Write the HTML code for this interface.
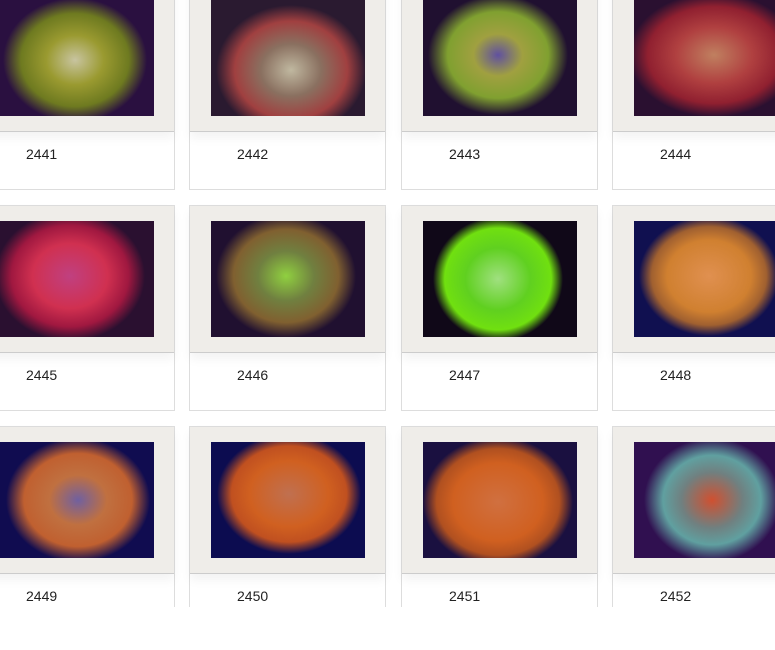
<!DOCTYPE html><html><head><style>
body{margin:0;width:775px;height:650px;overflow:hidden;background:#fff;font-family:"Liberation Sans",sans-serif}
#clip{position:absolute;left:0;top:0;width:775px;height:607px;overflow:hidden}
.c{position:absolute;width:195px;height:204px;border:1px solid #ddd;background:#fff}
.g{position:absolute;left:0;top:0;width:195px;height:146px;background:#efede9;border-bottom:1px solid #ccc;box-shadow:0 6px 10px rgba(0,0,0,.05)}
.p{position:absolute;left:21px;top:15px;width:154px;height:116px}
.t{position:absolute;left:47px;top:161px;font-size:14px;color:#222}
</style></head><body><div id="clip">
<div class="c" style="left:-22px;top:-16px"><div class="g"><div class="p" style="background:radial-gradient(ellipse 72px 62px at 75px 60px,#c8c4a0 0%,#9a9a30 40%,#6e7a20 75%,#2a1040 100%)"></div></div><div class="t">2441</div></div>
<div class="c" style="left:189px;top:-16px"><div class="g"><div class="p" style="background:radial-gradient(ellipse 75px 65px at 80px 70px,#c0b8a0 0%,#8a7060 40%,#a04040 75%,#2a1a30 100%)"></div></div><div class="t">2442</div></div>
<div class="c" style="left:401px;top:-16px"><div class="g"><div class="p" style="background:radial-gradient(ellipse 70px 60px at 75px 55px,#6050a0 0%,#a0a040 35%,#80a030 72%,#201030 100%)"></div></div><div class="t">2443</div></div>
<div class="c" style="left:612px;top:-16px"><div class="g"><div class="p" style="background:radial-gradient(ellipse 85px 62px at 80px 55px,#c08060 0%,#b04040 45%,#902030 78%,#2a1030 100%)"></div></div><div class="t">2444</div></div>

<div class="c" style="left:-22px;top:205px"><div class="g"><div class="p" style="background:radial-gradient(ellipse 75px 65px at 70px 55px,#c04080 0%,#d03050 50%,#a01840 78%,#2a1030 100%)"></div></div><div class="t">2445</div></div>
<div class="c" style="left:189px;top:205px"><div class="g"><div class="p" style="background:radial-gradient(ellipse 70px 62px at 75px 55px,#90d040 0%,#708040 40%,#806030 75%,#201030 100%)"></div></div><div class="t">2446</div></div>
<div class="c" style="left:401px;top:205px"><div class="g"><div class="p" style="background:radial-gradient(ellipse 65px 62px at 75px 58px,#a0e080 0%,#60d020 50%,#70e010 82%,#100818 100%)"></div></div><div class="t">2447</div></div>
<div class="c" style="left:612px;top:205px"><div class="g"><div class="p" style="background:radial-gradient(ellipse 70px 60px at 75px 55px,#e09050 0%,#d08030 60%,#a06030 82%,#101050 100%)"></div></div><div class="t">2448</div></div>

<div class="c" style="left:-22px;top:426px"><div class="g"><div class="p" style="background:radial-gradient(ellipse 72px 62px at 78px 58px,#7060a0 0%,#c07040 40%,#c06030 75%,#100c50 100%)"></div></div><div class="t">2449</div></div>
<div class="c" style="left:189px;top:426px"><div class="g"><div class="p" style="background:radial-gradient(ellipse 72px 60px at 78px 52px,#c07050 0%,#d06020 55%,#c05020 80%,#0c0c50 100%)"></div></div><div class="t">2450</div></div>
<div class="c" style="left:401px;top:426px"><div class="g"><div class="p" style="background:radial-gradient(ellipse 75px 65px at 75px 60px,#d07040 0%,#d06020 60%,#b05020 82%,#1a1040 100%)"></div></div><div class="t">2451</div></div>
<div class="c" style="left:612px;top:426px"><div class="g"><div class="p" style="background:radial-gradient(ellipse 68px 62px at 78px 58px,#d05030 0%,#708080 45%,#60a0a0 72%,#301050 100%)"></div></div><div class="t">2452</div></div>
</div></body></html>
